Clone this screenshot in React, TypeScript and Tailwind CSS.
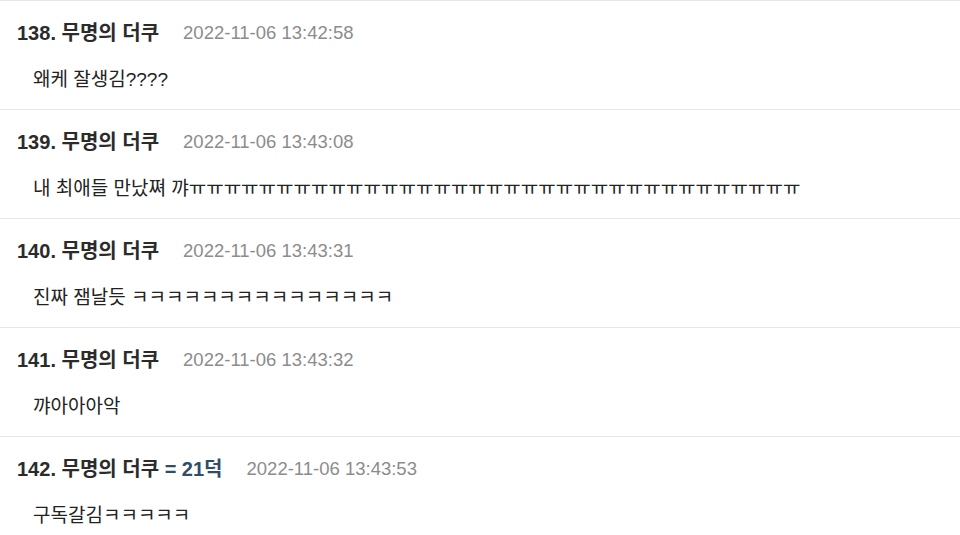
const comments = [
  { no: 138, name: "무명의 더쿠", tag: "", date: "2022-11-06 13:42:58", body: "왜케 잘생김????" },
  { no: 139, name: "무명의 더쿠", tag: "", date: "2022-11-06 13:43:08", body: "내 최애들 만났쪄 꺄" + "ㅠ".repeat(35) },
  { no: 140, name: "무명의 더쿠", tag: "", date: "2022-11-06 13:43:31", body: "진짜 잼날듯 " + "ㅋ".repeat(15) },
  { no: 141, name: "무명의 더쿠", tag: "", date: "2022-11-06 13:43:32", body: "꺄아아아악" },
  { no: 142, name: "무명의 더쿠", tag: "= 21덕", date: "2022-11-06 13:43:53", body: "구독갈김ㅋㅋㅋㅋㅋ" },
];

function CommentRow({ c }: { c: (typeof comments)[number] }) {
  return (
    <li className="border-t border-[#e6e6e6] pt-[18px] pb-[16px]">
      <div className="flex items-center h-[28px] pl-[17px]">
        <span className="text-[20px] font-bold text-[#2b2b2b] whitespace-nowrap">
          {c.no}. {c.name}
          {c.tag && <span className="text-[#2f4c6b]"> {c.tag}</span>}
        </span>
        <span className="ml-[24px] text-[18.5px] text-[#8c8c8c] whitespace-nowrap">{c.date}</span>
      </div>
      <p className="mt-[20px] h-[26px] leading-[26px] pl-[33px] text-[19px] text-[#222] whitespace-nowrap">
        {c.body}
      </p>
    </li>
  );
}

export default function App() {
  return (
    <div
      className="w-[960px] h-[535px] overflow-hidden bg-white"
      style={{ fontFamily: '"Liberation Sans", "Noto Sans CJK KR", sans-serif' }}
    >
      <ul>
        {comments.map((c) => (
          <CommentRow key={c.no} c={c} />
        ))}
      </ul>
    </div>
  );
}
